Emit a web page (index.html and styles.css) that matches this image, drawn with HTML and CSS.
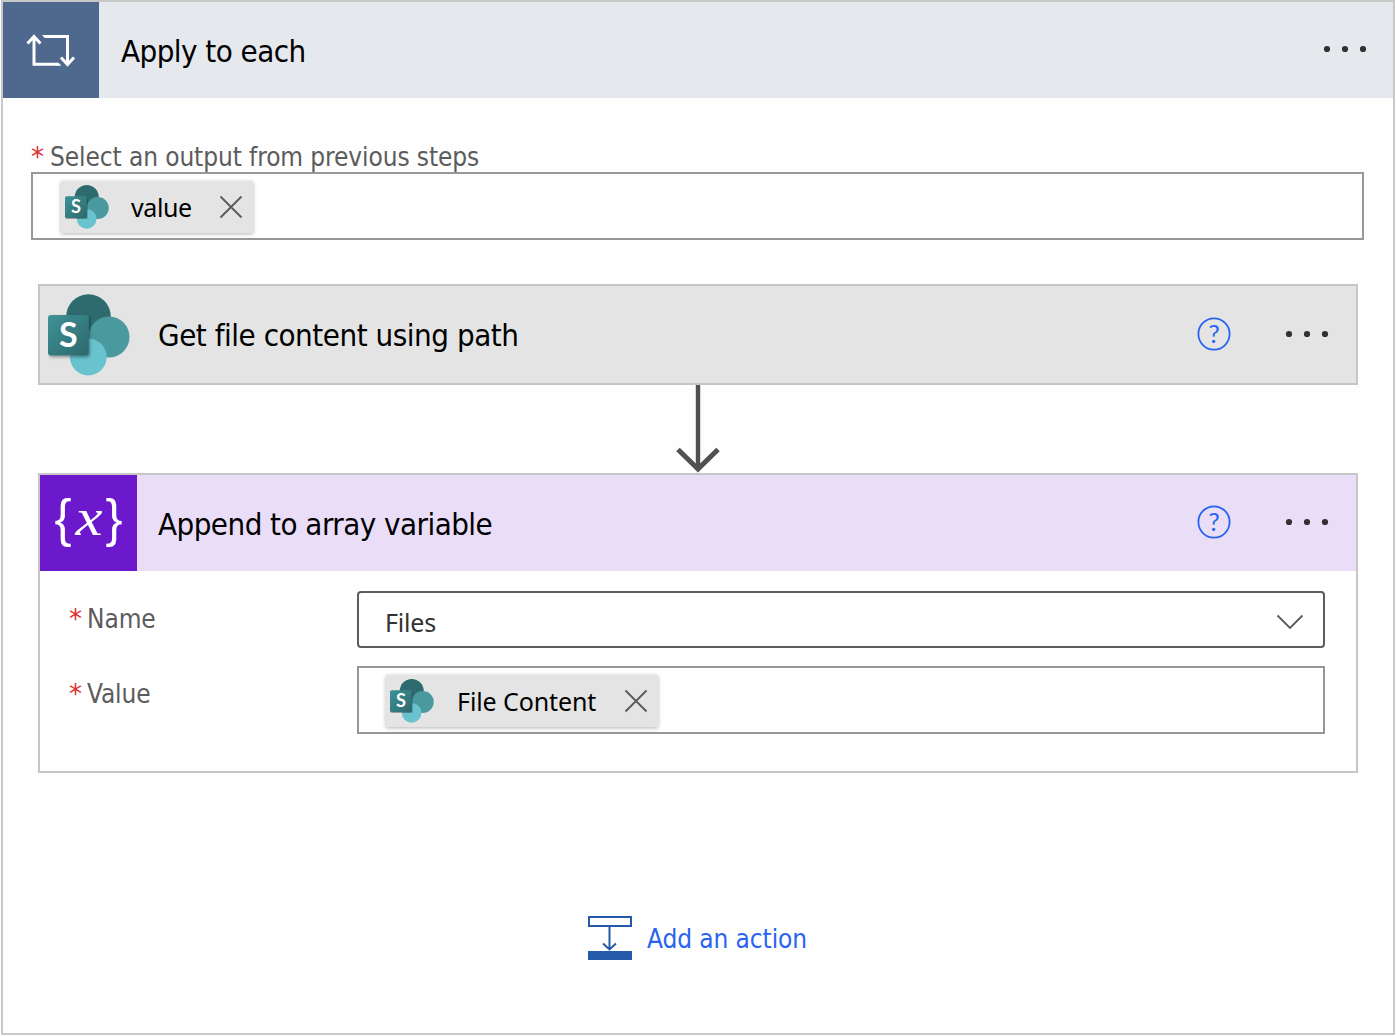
FILE: index.html
```html
<!DOCTYPE html>
<html lang="en">
<head>
    <meta charset="UTF-8">
    <meta name="viewport" content="width=device-width, initial-scale=1.0">
    <title>Apply to each</title>
    <link rel="stylesheet" href="styles.css">
</head>
<body>
<!-- Shared icons -->
<svg class="sprite" width="0" height="0">
    <defs>
        <linearGradient id="tile" x1="0" y1="0" x2="1" y2="1">
            <stop offset="0" stop-color="#3f9297"/>
            <stop offset="1" stop-color="#2c686c"/>
        </linearGradient>
        <filter id="tile-shadow" x="-20%" y="-20%" width="150%" height="150%">
            <feDropShadow dx="1" dy="1.5" stdDeviation="1.4" flood-opacity="0.4"/>
        </filter>
    </defs>
    <symbol id="sharepoint" viewBox="0 0 82 82">
        <circle cx="40.5" cy="22.5" r="22.3" fill="#2d6b6e"/>
        <circle cx="61" cy="43" r="20.5" fill="#4a999f"/>
        <circle cx="40.3" cy="63" r="18.4" fill="#68c3cf"/>
        <rect x="0" y="21" width="40.8" height="40.5" rx="3" fill="url(#tile)" filter="url(#tile-shadow)"/>
        <text x="20.4" y="53" class="logo-letter" text-anchor="middle">S</text>
    </symbol>
    <symbol id="help" viewBox="0 0 34 34">
        <circle cx="17" cy="17" r="15.6" fill="none" stroke="#2864f0" stroke-width="1.8"/>
        <text x="17" y="26" class="help-mark" text-anchor="middle">?</text>
    </symbol>
    <symbol id="dots" viewBox="0 0 44 8">
        <circle cx="4" cy="4" r="3.1" fill="#323130"/>
        <circle cx="22" cy="4" r="3.1" fill="#323130"/>
        <circle cx="40" cy="4" r="3.1" fill="#323130"/>
    </symbol>
    <symbol id="close" viewBox="0 0 24 24">
        <path d="M1.5 1.5 22.5 22.5M22.5 1.5 1.5 22.5" fill="none" stroke="#5a5a5a" stroke-width="1.8"/>
    </symbol>
</svg>

<div class="scope">
    <div class="scope__header">
        <div class="scope__icon">
            <svg width="50" height="34" viewBox="0 0 50 34" fill="none" stroke="#fff" stroke-width="3">
                <path d="M8 4V31.300H31M1.500 10.500 8 3.500 14.500 10.500"/>
                <path d="M19 3.500H41.500V31M35 24.500 41.500 31.500 48 24.500"/>
                <path d="M16 2H20V5H18.800ZM30 29.800H32.500L35.500 32.800H30Z" fill="#fff" stroke="none"/>
            </svg>
        </div>
        <h1 class="title">Apply to each</h1>
        <svg class="dots" width="44" height="8"><use href="#dots"/></svg>
    </div>

    <div class="scope__body">
        <label class="label label_output"><span class="required">*</span>Select an output from previous steps</label>
        <div class="field field_output">
            <div class="token">
                <svg width="44" height="44"><use href="#sharepoint"/></svg>
                <span class="token__text token__text_value">value</span>
                <svg class="token__close" width="24" height="24"><use href="#close"/></svg>
            </div>
        </div>

        <div class="action action_sharepoint">
            <div class="action__header">
                <div class="action__icon">
                    <svg width="82" height="82"><use href="#sharepoint"/></svg>
                </div>
                <h2 class="title title_get">Get file content using path</h2>
                <svg class="help" width="34" height="34"><use href="#help"/></svg>
                <svg class="dots" width="44" height="8"><use href="#dots"/></svg>
            </div>
        </div>

        <svg class="arrow" width="44" height="88" viewBox="0 0 44 88" fill="none" stroke="#505050">
            <path d="M22 0V84" stroke-width="4.400"/>
            <path d="M2 64.500 22 84 42 64.500" stroke-width="5"/>
        </svg>

        <div class="action action_variable">
            <div class="action__header">
                <div class="action__icon">
                    <svg width="97" height="96" viewBox="0 0 97 96" fill="#fff">
                        <text x="23" y="61" class="brace" text-anchor="middle">{</text>
                        <text class="variable-x" text-anchor="middle" transform="translate(49 60) scale(1.15 1)">x</text>
                        <text x="74" y="61" class="brace" text-anchor="middle">}</text>
                    </svg>
                </div>
                <h2 class="title">Append to array variable</h2>
                <svg class="help" width="34" height="34"><use href="#help"/></svg>
                <svg class="dots" width="44" height="8"><use href="#dots"/></svg>
            </div>
            <div class="params">
                <label class="label"><span class="required">*</span>Name</label>
                <div class="select">
                    <span class="select__text">Files</span>
                    <svg width="28" height="16" viewBox="0 0 28 16" fill="none" stroke="#5a5a5a" stroke-width="1.800">
                        <path d="M1.500 1.500 14 14 26.500 1.500"/>
                    </svg>
                </div>
                <label class="label"><span class="required">*</span>Value</label>
                <div class="field">
                    <div class="token">
                        <svg width="44" height="44"><use href="#sharepoint"/></svg>
                        <span class="token__text">File Content</span>
                        <svg class="token__close" width="24" height="24"><use href="#close"/></svg>
                    </div>
                </div>
            </div>
        </div>

        <div class="add">
            <svg width="44" height="44" viewBox="0 0 44 44" fill="none" stroke="#2458a8" stroke-width="2">
                <path d="M1 1H43V10H1Z"/>
                <path d="M21.500 10V34M15 27.500 21.500 33.500 28 27.500"/>
                <path d="M0 35H44V44H0Z" fill="#2458a8" stroke="none"/>
            </svg>
            <span class="add__text">Add an action</span>
        </div>
    </div>
</div>
</body>
</html>
```
FILE: styles.css
```css
* { box-sizing: border-box; }
body {
    margin: 0;
    background-color: #fff;
    font-family: "DejaVu Sans Condensed", "DejaVu Sans", sans-serif;
    font-stretch: condensed;
}
svg {
    display: block;
    flex: none;
}
.sprite { position: absolute; }
.scope {
    width: 1394px;
    height: 1035px;
    margin-left: 1px;
    border: 2px solid #c8c8c8;
    background: #fefefe;
}
.scope__header {
    display: flex;
    align-items: center;
    height: 96px;
    padding-right: 26px;
    background: #e5e8ed;
}
.scope__icon {
    display: flex;
    align-items: center;
    justify-content: center;
    width: 96px;
    height: 96px;
    margin-right: 22px;
    background: #4f698e;
}
.title {
    margin: 0;
    padding-top: 1px;
    font-size: 31px;
    font-weight: normal;
    line-height: 40px;
    letter-spacing: -0.54px;
    white-space: nowrap;
    color: #000;
}
.title_get { letter-spacing: -0.47px; }
.dots {
    margin-left: auto;
    margin-bottom: 2px;
}
.scope__body {
    padding: 43px 29px 0 28px;
}
.label {
    display: block;
    height: 31px;
    padding-top: 1px;
    font-size: 26px;
    line-height: 31px;
    letter-spacing: -0.1px;
    white-space: nowrap;
    color: #5c5c5c;
}
.label_output { padding-left: 1px; }
.label_output .required { width: 18px; }
.required {
    display: inline-block;
    width: 17px;
    font-family: "DejaVu Sans", sans-serif;
    font-stretch: normal;
    line-height: 31px;
    text-indent: -1px;
    color: #dc2d2d;
}
.field {
    height: 68px;
    padding: 7px 27px;
    border: 2px solid #979797;
    background: #fff;
}
.field_output { padding-left: 28px; }
.token {
    display: inline-flex;
    align-items: center;
    height: 52px;
    padding: 0 10px 1px 4px;
    background: #e4e4e4;
    box-shadow: 0 1px 4px rgba(0, 0, 0, 0.3);
}
.token__text {
    margin: 1px 28px 0 23px;
    font-family: "Noto Sans", sans-serif;
    font-stretch: normal;
    font-size: 25px;
    line-height: 36px;
    letter-spacing: -0.1px;
    white-space: nowrap;
    color: #000;
}
.token__text_value {
    margin: 1px 27px 0 22px;
    letter-spacing: -0.4px;
}
.action {
    margin: 0 6px 0 7px;
    border: 2px solid #c6c6c6;
    background: #fff;
}
.action_sharepoint {
    margin-top: 44px;
    background: #e4e4e4;
}
.action__header {
    display: flex;
    align-items: center;
    height: 97px;
    padding-right: 26px;
}
.action__icon {
    display: flex;
    align-items: center;
    justify-content: center;
    width: 97px;
    height: 100%;
    margin-right: 21px;
}
.action__header .help {
    margin-left: auto;
    margin-bottom: 2px;
}
.action__header .dots { margin: 0 1px 2px 54px; }
.arrow { margin: 0 auto; }
.action_variable { height: 300px; }
.action_variable .action__header {
    height: 96px;
    background: #eaddf7;
}
.action_variable .help { margin-bottom: 3px; }
.action_variable .title { padding-top: 2px; }
.action_variable .action__icon { background: #6c18cd; }
.params {
    display: grid;
    grid-template-columns: 287px 1fr;
    row-gap: 18px;
    padding: 20px 31px 0 30px;
}
.params .label { padding-top: 13px; }
.select {
    display: flex;
    align-items: center;
    justify-content: space-between;
    height: 57px;
    padding: 4px 19px 0 26px;
    border: 2px solid #5c5c5c;
    border-radius: 4px;
    background: #fff;
}
.select__text {
    font-family: "Noto Sans", sans-serif;
    font-stretch: normal;
    font-size: 25px;
    letter-spacing: -0.2px;
    color: #333;
}
.add {
    display: flex;
    align-items: center;
    justify-content: center;
    gap: 15px;
    margin-top: 143px;
}
.add__text {
    padding-top: 2px;
    font-size: 26px;
    line-height: 32px;
    letter-spacing: -0.1px;
    white-space: nowrap;
    color: #2864f0;
}
.logo-letter {
    font: bold 34px Lato, sans-serif;
    fill: #fff;
}
.help-mark {
    font: 25px Lato, sans-serif;
    fill: #2864f0;
}
.brace { font: 51px "Liberation Sans", sans-serif; }
.variable-x {
    font: italic 53px "Liberation Serif", serif;
}
```
